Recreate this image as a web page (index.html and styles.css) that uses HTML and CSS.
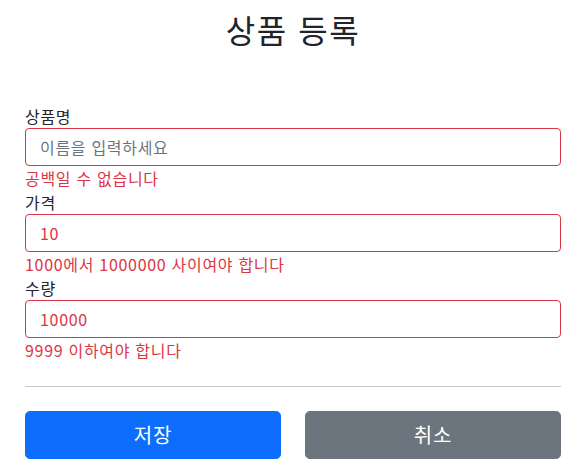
FILE: index.html
```html
<!DOCTYPE html>
<html lang="ko">
<head>
<meta charset="utf-8">
<title>상품 등록</title>
<link rel="stylesheet" href="styles.css">
</head>
<body>
<div class="container">
  <div class="header">
    <h2 class="title">상품 등록</h2>
  </div>
  <form class="form">
    <div class="field">
      <label class="label" for="itemName">상품명</label>
      <input class="form-control field-error" id="itemName" type="text" placeholder="이름을 입력하세요">
      <div class="field-error">공백일 수 없습니다</div>
    </div>
    <div class="field">
      <label class="label" for="price">가격</label>
      <input class="form-control field-error" id="price" type="text" value="10">
      <div class="field-error">1000에서 1000000 사이여야 합니다</div>
    </div>
    <div class="field">
      <label class="label" for="quantity">수량</label>
      <input class="form-control field-error" id="quantity" type="text" value="10000">
      <div class="field-error">9999 이하여야 합니다</div>
    </div>
    <hr class="divider">
    <div class="row">
      <button class="btn btn-primary" type="button">저장</button>
      <button class="btn btn-secondary" type="button">취소</button>
    </div>
  </form>
</div>
</body>
</html>
```
FILE: styles.css
```css
* {
  box-sizing: border-box;
}

html, body {
  margin: 0;
  padding: 0;
  background: #fff;
}

body {
  font-family: "Noto Sans CJK KR", "Noto Sans", sans-serif;
  font-size: 16px;
  line-height: 1.5;
  color: #212529;
  letter-spacing: 0.7px;
}

.container {
  max-width: 560px;
  margin: 0 auto;
  padding: 0 12px;
}

.header {
  padding: 10px 0 48px;
  text-align: center;
}

.title {
  margin: 0 0 8px;
  font-size: 32px;
  font-weight: 400;
  line-height: 1.2;
  letter-spacing: 1.6px;
}

.form {
  display: flex;
  flex-direction: column;
}

.field {
  display: flex;
  flex-direction: column;
}

.label {
  display: block;
  height: 24px;
}

.form-control {
  display: block;
  width: 100%;
  height: 38px;
  padding: 6px 12px 6px 14px;
  font-family: inherit;
  font-size: 16px;
  line-height: 1.5;
  letter-spacing: 0.7px;
  color: #212529;
  background: #fff;
  border: 1px solid #ced4da;
  border-radius: 4px;
  outline: none;
}

.form-control::placeholder {
  color: #6c757d;
  opacity: 1;
}

.field-error {
  border-color: #dc3545;
  color: #dc3545;
}

div.field-error {
  height: 24px;
}

.divider {
  margin: 24px 0;
  border: 0;
  border-top: 1px solid #c8c9ca;
  height: 0;
}

.row {
  display: flex;
  gap: 24px;
}

.btn {
  flex: 1 1 0;
  height: 48px;
  padding: 8px 16px;
  font-family: inherit;
  font-size: 20px;
  line-height: 1.5;
  letter-spacing: 0.8px;
  color: #fff;
  border: 1px solid transparent;
  border-radius: 4.8px;
  text-align: center;
}

.btn-primary {
  background: #0d6efd;
  border-color: #0d6efd;
}

.btn-secondary {
  background: #6c757d;
  border-color: #6c757d;
}
```
